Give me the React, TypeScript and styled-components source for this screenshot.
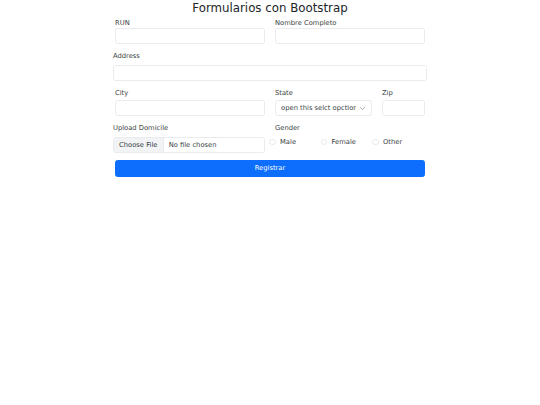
import styled, { createGlobalStyle } from "styled-components";

const GlobalStyle = createGlobalStyle`
    body {
        margin: 0;
        background: #fff;
        color: #212529;
        font-family: "DejaVu Sans", "Noto Sans", sans-serif;
    }
    * { box-sizing: border-box; }
`;

const chevron =
    "data:image/svg+xml,%3csvg xmlns='http://www.w3.org/2000/svg' viewBox='0 0 16 16'%3e%3cpath fill='none' stroke='%23555b61' stroke-linecap='round' stroke-linejoin='round' stroke-width='1.6' d='m2 5 6 6 6-6'/%3e%3c/svg%3e";

export default function App() {
    return (
        <>
            <GlobalStyle />
            <Title>Formularios con Bootstrap</Title>
            <Form onSubmit={(e) => e.preventDefault()}>
                <Row $cols="150px 150px" $inset>
                    <Field>
                        <Label $gap={0.3}>RUN</Label>
                        <Input type="text" />
                    </Field>
                    <Field>
                        <Label $gap={0.3}>Nombre Completo</Label>
                        <Input type="text" />
                    </Field>
                </Row>

                <Row $cols="1fr">
                    <Field>
                        <Label $gap={3.4}>Address</Label>
                        <Input type="text" />
                    </Field>
                </Row>

                <Row $cols="150px 97px 43px" $inset>
                    <Field>
                        <Label $gap={2.3}>City</Label>
                        <Input type="text" />
                    </Field>
                    <Field>
                        <Label $gap={2.3}>State</Label>
                        <Select defaultValue="">
                            <option value="">open this selct opction</option>
                            <option>1</option>
                            <option>2</option>
                        </Select>
                    </Field>
                    <Field>
                        <Label $gap={2.3}>Zip</Label>
                        <Input type="text" />
                    </Field>
                </Row>

                <Row $cols="152px 1fr">
                    <Field>
                        <Label $gap={3.3}>Upload Domicile</Label>
                        <FileInput type="file" />
                    </Field>
                    <Field>
                        <Label $gap={3.3}>Gender</Label>
                        <Radios>
                            {["Male", "Female", "Other"].map((g) => (
                                <RadioItem key={g}>
                                    <Radio type="radio" name="gender" value={g} />
                                    {g}
                                </RadioItem>
                            ))}
                        </Radios>
                    </Field>
                </Row>

                <Row $cols="1fr" $inset>
                    <Submit type="submit">Registrar</Submit>
                </Row>
            </Form>
        </>
    );
}

const Title = styled.h3`
    margin: 0 0 3.4px;
    padding-top: 0.5px;
    font-size: 11.8px;
    font-weight: 400;
    line-height: 1.2;
    text-align: center;
    color: #212529;
`;

const Form = styled.form`
    width: 314px;
    margin: 0 auto;
    display: flex;
    flex-direction: column;
    gap: 7px;
`;

const Row = styled.div<{ $cols: string; $inset?: boolean }>`
    display: grid;
    grid-template-columns: ${(p) => p.$cols};
    column-gap: 10px;
    padding: 0 ${(p) => (p.$inset ? "2px" : "0")};
`;

const Field = styled.div`
    display: flex;
    flex-direction: column;
    min-width: 0;
`;

const Label = styled.label<{ $gap: number }>`
    font-size: 6.75px;
    line-height: 1.5;
    margin-bottom: ${(p) => p.$gap}px;
    color: #3a3f44;
`;

const Input = styled.input`
    height: 16px;
    width: 100%;
    padding: 0 5.1px;
    font: inherit;
    font-size: 6.75px;
    color: #212529;
    background: #fff;
    border: 1px solid #e9ecef;
    border-radius: 2.5px;
    outline: none;
`;

const Select = styled.select`
    appearance: none;
    height: 16px;
    width: 100%;
    padding: 0 15.3px 0 5.1px;
    font: inherit;
    font-size: 6.75px;
    color: #3a3f44;
    background: #fff url("${chevron}") no-repeat right 5.1px center / 6.8px 5.1px;
    border: 1px solid #e9ecef;
    border-radius: 2.5px;
    outline: none;
`;

const FileInput = styled.input`
    height: 16.3px;
    width: 100%;
    padding: 0;
    font: inherit;
    font-size: 6.75px;
    line-height: 14.3px;
    color: #3a3f44;
    background: #fff;
    border: 1px solid #e9ecef;
    border-radius: 2.5px;
    overflow: hidden;

    &::file-selector-button {
        height: 14.3px;
        margin: 0 5.1px 0 0;
        padding: 0 5.1px;
        font: inherit;
        color: #3a3f44;
        background: #f1f3f5;
        border: 0;
        border-right: 1px solid #e9ecef;
        border-radius: 0;
    }
`;

const Radios = styled.div`
    display: grid;
    grid-template-columns: 51.5px 51.5px 1fr;
    margin-left: -6px;
`;

const RadioItem = styled.label`
    display: flex;
    align-items: center;
    gap: 4.3px;
    font-size: 6.75px;
    line-height: 10.2px;
    color: #3a3f44;
`;

const Radio = styled.input`
    appearance: none;
    margin: 0;
    width: 6.75px;
    height: 6.75px;
    border: 1px solid #e9ecef;
    border-radius: 50%;
    background: #fff;
`;

const Submit = styled.button`
    height: 16.5px;
    width: 100%;
    padding: 0;
    font: inherit;
    font-size: 6.75px;
    color: #fff;
    background: #0d6efd;
    border: 1px solid #0d6efd;
    border-radius: 2.5px;
    cursor: pointer;
`;
